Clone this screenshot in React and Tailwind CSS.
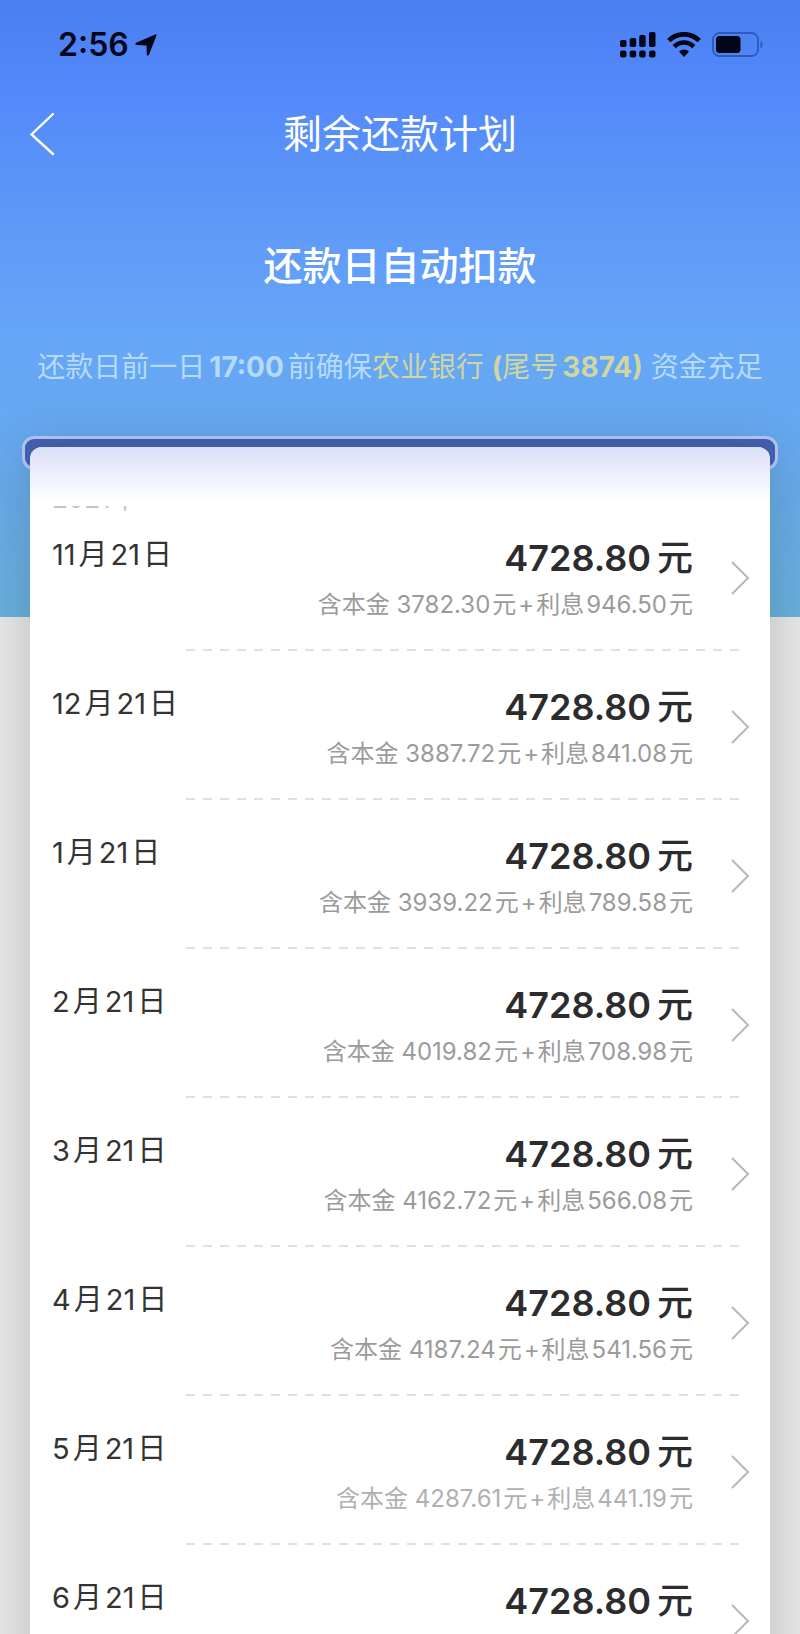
import React from 'react';

const repayments = [
  { month: '11', day: '21', amount: '4728.80', principal: '3782.30', interest: '946.50' },
  { month: '12', day: '21', amount: '4728.80', principal: '3887.72', interest: '841.08' },
  { month: '1', day: '21', amount: '4728.80', principal: '3939.22', interest: '789.58' },
  { month: '2', day: '21', amount: '4728.80', principal: '4019.82', interest: '708.98' },
  { month: '3', day: '21', amount: '4728.80', principal: '4162.72', interest: '566.08' },
  { month: '4', day: '21', amount: '4728.80', principal: '4187.24', interest: '541.56' },
  { month: '5', day: '21', amount: '4728.80', principal: '4287.61', interest: '441.19', faded: true },
  { month: '6', day: '21', amount: '4728.80' },
];

const SignalIcon = () => (
  <svg width="36" height="26" viewBox="0 0 36 26" fill="#02061a">
    <rect x="0" y="8" width="6.5" height="7" rx="1.8" />
    <rect x="9.7" y="6" width="6.5" height="9" rx="1.8" />
    <rect x="19.2" y="3" width="6.5" height="12" rx="1.8" />
    <rect x="29" y="0" width="6.5" height="15" rx="1.8" />
    <rect x="0" y="18.5" width="6.5" height="7" rx="2" />
    <rect x="9.7" y="18.5" width="6.5" height="7" rx="2" />
    <rect x="19.2" y="18.5" width="6.5" height="7" rx="2" />
    <rect x="29" y="18.5" width="6.5" height="7" rx="2" />
  </svg>
);

const WifiIcon = () => (
  <svg width="34" height="26" viewBox="0 0 34 26" fill="none" stroke="#02061a">
    <path d="M1.8 8.6a21.5 21.5 0 0 1 30.4 0" strokeWidth="4.8" />
    <path d="M7.2 14.6a13.9 13.9 0 0 1 19.6 0" strokeWidth="4.6" />
    <path d="M17 25l-5-5.400a7.200 7.200 0 0 1 10 0z" fill="#02061a" stroke="none" />
  </svg>
);

const BatteryIcon = () => (
  <svg width="52" height="26" viewBox="0 0 52 26">
    <rect x="1" y="1" width="45" height="23" rx="6.5" fill="none" stroke="#2c5bb8" strokeWidth="1.8" />
    <rect x="4" y="4" width="24.5" height="17" rx="3.5" fill="#02061a" />
    <path d="M48.5 9c2.6 1 2.6 6.5 0 7.5z" fill="#2c5bb8" />
  </svg>
);

const StatusBar = () => (
  <div className="flex items-center justify-between h-[90px] pl-[58px] pr-[36px] text-[#02061a]">
    <div className="flex items-center gap-[6px]">
      <span className="text-[32px] leading-[40px] font-semibold">2:56</span>
      <svg width="22" height="22" viewBox="0 0 22 22" fill="#02061a">
        <path d="M20.3.4c.9-.4 1.600.3 1.200 1.200L14 20.800c-.5 1.200-2.200.9-2.200-.4L11.500 11.400 1.600 11C.2 10.900-.1 9.300 1.100 8.700z" />
      </svg>
    </div>
    <div className="flex items-center gap-[11px]">
      <SignalIcon />
      <WifiIcon />
      <BatteryIcon />
    </div>
  </div>
);

const RepaymentRow = ({ item, last }) => (
  <li>
    <a href="#detail" className="flex items-start h-[138px] pl-[22px] pr-[20px]">
      <div className="flex gap-[3px] pt-[24px] text-[29px] leading-[40px] text-[#333]">
        <span>{item.month}</span>
        <span>月</span>
        <span>{item.day}</span>
        <span>日</span>
      </div>
      <div className="flex-1 pt-[24px] flex flex-col items-end">
        <div className="flex items-center gap-[6px] leading-[46px] text-[#2c2c2e]">
          <span className="text-[36px] font-semibold">{item.amount}</span>
          <span className="text-[36px] font-medium">元</span>
        </div>
        {item.principal && (
          <div className={`flex gap-[2px] text-[24px] leading-[48px] ${item.faded ? 'text-[#b0b0b0]' : 'text-[#9b9b9b]'}`}>
            <span>含本金 {item.principal}</span>
            <span>元</span>
            <span>+</span>
            <span>利息</span>
            <span>{item.interest}</span>
            <span>元</span>
          </div>
        )}
      </div>
      <svg className="ml-[37px] mt-[50px]" width="20" height="34" viewBox="0 0 20 34" fill="none" stroke="#b8b8b8" strokeWidth="2">
        <path d="M2 1l16 16L2 33" />
      </svg>
    </a>
    {!last && (
      <div className="ml-[156px] mr-[28px] mb-[9px] h-[2px] bg-[repeating-linear-gradient(90deg,#e0e0e0_0_9px,transparent_9px_17px)]" />
    )}
  </li>
);

export default function App() {
  return (
    <div className="h-screen overflow-hidden flex flex-col font-[Inter,'Noto_Sans_CJK_SC',sans-serif] bg-[linear-gradient(180deg,#4b7ff0_0px,#5388fa_85px,#5a96f8_190px,#5f9af8_230px,#66a6f8_340px,#66a9ee_450px,#67b0dc_617px,#e6e6e6_617px)]">
      <StatusBar />

      <header className="grid grid-cols-[60px_1fr_60px] items-center h-[88px] px-[28px]">
        <button type="button" aria-label="返回" className="text-white">
          <svg width="28" height="44" viewBox="0 0 28 44" fill="none" stroke="currentColor" strokeWidth="2.4" strokeLinecap="round">
            <path d="M25 2L3.5 22.5 25 42" />
          </svg>
        </button>
        <h1 className="text-center text-[39px] leading-[56px] text-white">剩余还款计划</h1>
      </header>

      <section className="text-center">
        <h2 className="mt-[60px] text-[39px] leading-[56px] font-medium text-white">还款日自动扣款</h2>
        <p className="mt-[53px] text-[28px] leading-[40px] whitespace-nowrap text-[#b5dbfb]">
          还款日前一日<b className="mx-1">17:00</b>前确保
          <span className="text-[#d0d69f]">
            农业银行 <b>(</b>尾号<b className="ml-1">3874)</b>
          </span>{' '}
          资金充足
        </p>
      </section>

      {/* slot the bill slides out of */}
      <div className="mt-[49px] mx-[22px] h-[34px] shrink-0 rounded-xl border-[3px] border-[#b4c9fa] bg-[#4262b3]" />

      <main className="relative flex-1 min-h-0 -mt-[23px] -mb-[60px] mx-[30px] rounded-t-xl bg-white overflow-hidden shadow-[0_0_50px_rgba(40,40,40,0.22)]">
        <div className="h-[54px] bg-gradient-to-b from-[#dadff7] to-white" />
        {/* year label, mostly scrolled under the slot */}
        <div className="mt-[5px] h-[6px] pl-[22px] flex items-end overflow-hidden">
          <span className="text-[26px] leading-[26px] text-[#c4c4c4]">2021年</span>
        </div>
        <ul className="-mt-px">
          {repayments.map((item, i) => (
            <RepaymentRow key={item.month} item={item} last={i === repayments.length - 1} />
          ))}
        </ul>
      </main>
    </div>
  );
}
